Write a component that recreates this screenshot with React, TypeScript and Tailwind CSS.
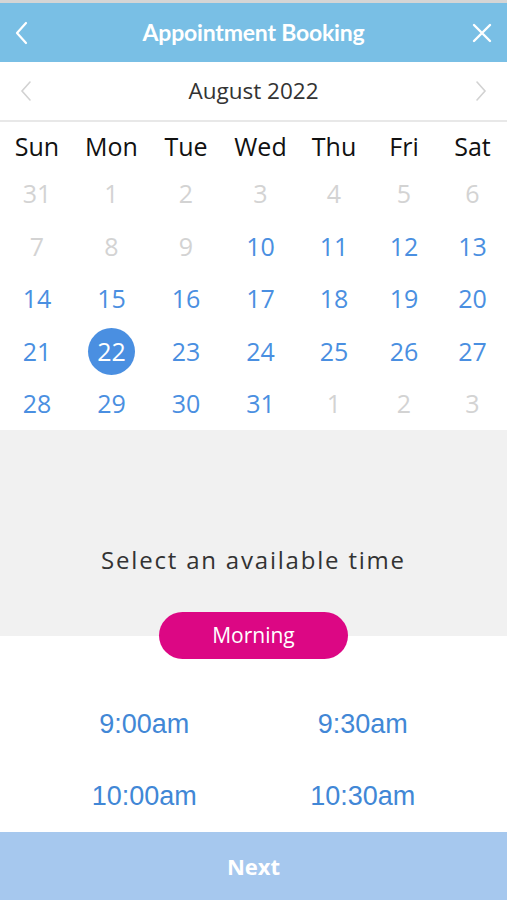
import React, { useState } from 'react';

const weekdays = ['Sun', 'Mon', 'Tue', 'Wed', 'Thu', 'Fri', 'Sat'];

type Day = { n: number; active: boolean };

// August 2022, padded with the neighbouring months
const weeks: Day[][] = [
  [31, 1, 2, 3, 4, 5, 6].map((n) => ({ n, active: false })),
  [7, 8, 9].map((n) => ({ n, active: false })).concat([10, 11, 12, 13].map((n) => ({ n, active: true }))),
  [14, 15, 16, 17, 18, 19, 20].map((n) => ({ n, active: true })),
  [21, 22, 23, 24, 25, 26, 27].map((n) => ({ n, active: true })),
  [28, 29, 30, 31].map((n) => ({ n, active: true })).concat([1, 2, 3].map((n) => ({ n, active: false }))),
];

const slots = ['9:00am', '9:30am', '10:00am', '10:30am'];

const App: React.FC = () => {
  const [selected, setSelected] = useState(22);

  return (
    <div className="h-[900px] w-full flex flex-col bg-white font-['Open_Sans',sans-serif] overflow-hidden">
      <div className="h-[3px] shrink-0 bg-[#d5d5d5]" />

      {/* header */}
      <div className="h-[59px] shrink-0 bg-[#79bfe5] flex items-center justify-between px-[14px]">
        <div className="w-[24px] flex">
          <svg width="16" height="24" viewBox="0 0 16 24" fill="none" stroke="white" strokeWidth="2.2" strokeLinecap="round" strokeLinejoin="round">
            <path d="M12 2 L3 12 L12 22" />
          </svg>
        </div>
        <h1 className="text-white font-bold text-[23px] font-['Lato',sans-serif] tracking-[-0.2px]">Appointment Booking</h1>
        <div className="w-[24px] flex justify-end">
          <svg width="22" height="22" viewBox="0 0 22 22" fill="none" stroke="white" strokeWidth="2.4" strokeLinecap="round">
            <path d="M3 3 L19 19 M19 3 L3 19" />
          </svg>
        </div>
      </div>

      {/* month */}
      <div className="h-[60px] shrink-0 flex items-center justify-between px-[19px] border-b-2 border-[#e8e8e8]">
        <svg width="14" height="22" viewBox="0 0 14 22" fill="none" stroke="#d2d2d2" strokeWidth="1.6" strokeLinecap="round">
          <path d="M11 2 L3 11 L11 20" />
        </svg>
        <span className="text-[22.5px] text-[#333333]">August 2022</span>
        <svg width="14" height="22" viewBox="0 0 14 22" fill="none" stroke="#d2d2d2" strokeWidth="1.6" strokeLinecap="round">
          <path d="M3 2 L11 11 L3 20" />
        </svg>
      </div>

      {/* calendar */}
      <div className="shrink-0 grid grid-cols-[74px_75px_74px_75px_72px_68px_69px]">
        {weekdays.map((d) => (
          <div key={d} className="h-[45.5px] pt-[4px] flex items-center justify-center text-[25px] text-[#111111]">
            {d}
          </div>
        ))}
        {weeks.flat().map((d, i) => (
          <div key={i} className="h-[52.6px] flex items-center justify-center">
            {d.active && d.n === selected ? (
              <span className="w-[47px] h-[47px] rounded-full bg-[#4a8fe1] text-white text-[25px] flex items-center justify-center">
                {d.n}
              </span>
            ) : (
              <button
                type="button"
                onClick={() => d.active && setSelected(d.n)}
                className={`text-[25px] ${d.active ? 'text-[#4a8fe1]' : 'text-[#d3d3d3]'}`}
              >
                {d.n}
              </button>
            )}
          </div>
        ))}
      </div>

      {/* time header */}
      <div className="shrink-0 bg-[#f1f1f1] flex flex-col items-center pt-[112px]">
        <p className="text-[24px] text-[#333333] tracking-[1.8px]">Select an available time</p>
        <div className="relative mt-[34px] -mb-[23px] w-[189px] h-[47px] rounded-full bg-[#dc0784] flex items-center justify-center text-white text-[21px]">
          Morning
        </div>
      </div>

      {/* slots */}
      <div className="flex-1 pt-[52px] px-[35px]">
        <div className="grid grid-cols-2">
          {slots.map((s) => (
            <button key={s} type="button" className="h-[72px] flex items-center justify-center text-[27px] text-[#4187d6] font-['Liberation_Sans',Arial,sans-serif]">
              {s}
            </button>
          ))}
        </div>
      </div>

      <button type="button" className="h-[68px] shrink-0 bg-[#a6c8ee] text-white font-bold text-[22px]">
        Next
      </button>
    </div>
  );
};

export default App;
